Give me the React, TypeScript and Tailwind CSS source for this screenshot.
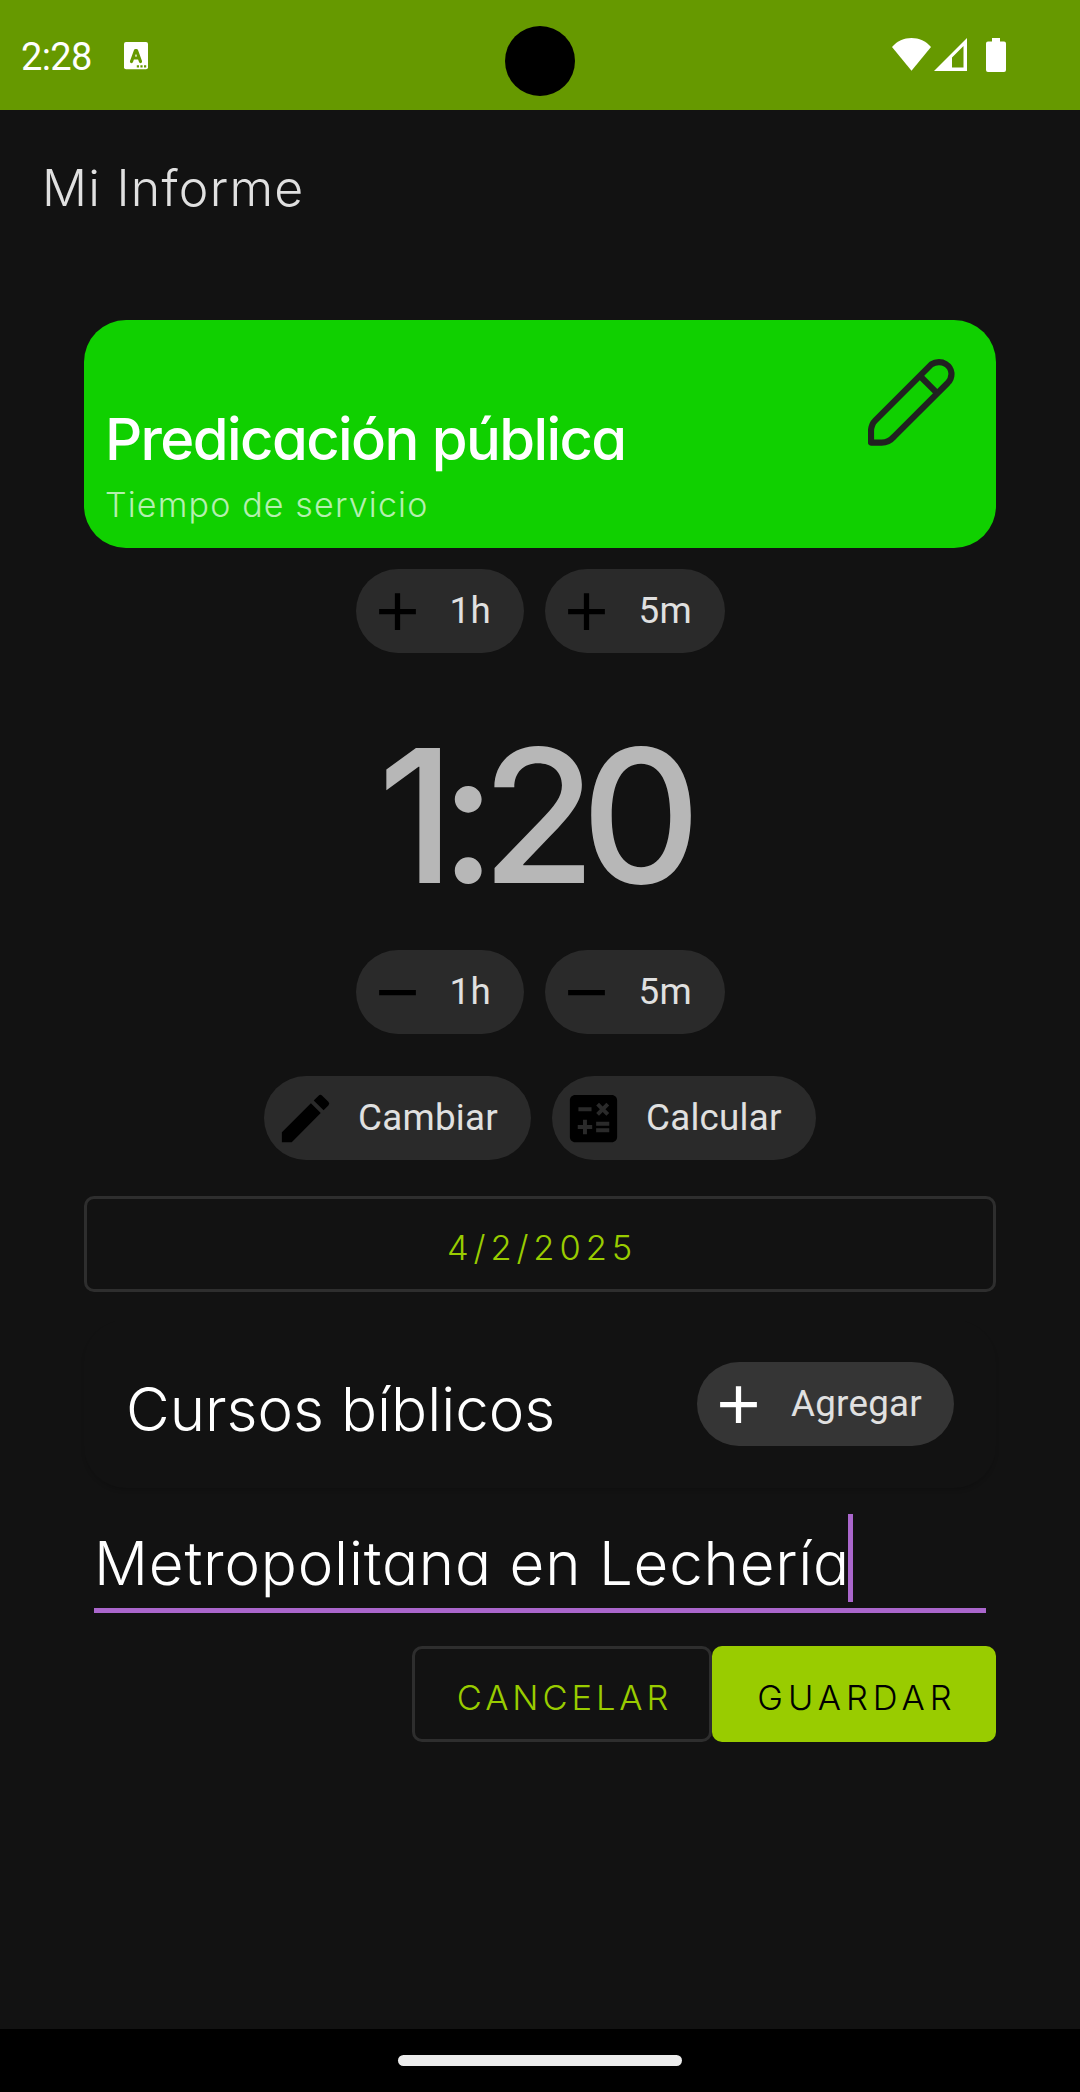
import { MdAdd, MdCalculate, MdEdit, MdRemove } from "react-icons/md";

const StatusBar = () => (
  <header className="relative flex h-[110px] items-start bg-[#669900] text-white">
    <span className="mt-[36px] ml-[21px] w-[103px] font-[Roboto,sans-serif] text-[38px] leading-[43px] font-normal tracking-[-0.6px]">
      2:28
    </span>
    {/* Keyboard notification */}
    <svg className="mt-[42px] h-[28px] w-[24px]" viewBox="0 0 24 28">
      <rect width="24" height="27.3" rx="2" fill="#fff" />
      <path d="M7.5 19.5 11.5 8.5h1L16.5 19.5M9 16h6" fill="none" stroke="#669900" strokeWidth="3.2" strokeLinecap="round" strokeLinejoin="round" />
      <path d="M12.8 23.2h2.2v2.2h-2.2zM16.4 23.2h2.2v2.2h-2.2zM20 23.2h2.2v2.2H20z" fill="#669900" />
    </svg>

    {/* Camera cutout */}
    <div className="absolute top-[26px] left-[505px] size-[70px] rounded-full bg-black" />

    <div className="mt-[38px] mr-[74px] ml-auto flex items-start">
      <svg className="h-[34px] w-[39px]" viewBox="0 0 39 34" fill="#fff">
        <path d="M0 9C5 3 12 0 19.5 0S34 3 39 9L19.5 32.7Z" />
      </svg>
      <svg className="ml-[3px] h-[34px] w-[33px]" viewBox="0 0 33 34">
        <path d="M0 33 33 0V33ZM18 19.5V29.5H29.5V8Z" fill="#fff" fillRule="evenodd" />
      </svg>
      <svg className="ml-[19px] h-[34px] w-[20px]" viewBox="0 0 20 34" fill="#fff">
        <path d="M6 0h8v3.500h4a2 2 0 0 1 2 2V32a2 2 0 0 1-2 2H2a2 2 0 0 1-2-2V5.500a2 2 0 0 1 2-2h4Z" />
      </svg>
    </div>
  </header>
);

const Chip = ({ icon: Icon, label, className = "", iconClassName = "text-black" }) => (
  <button className={`flex h-[84px] items-center rounded-full pl-[10px] ${className}`}>
    <Icon className={`size-[63px] shrink-0 ${iconClassName}`} />
    <span className="ml-[21px] pb-px font-[Roboto,sans-serif] text-[36.75px] leading-[42px] font-normal tracking-[0.25px] text-[#e0e0e0]">
      {label}
    </span>
  </button>
);

const App = () => {
  return (
    <div className="flex h-[2092px] w-[1080px] flex-col bg-[#121212] font-[Inter,sans-serif] font-light whitespace-nowrap [font-feature-settings:'cv11']">
      <StatusBar />

      <h1 className="flex h-[147px] items-center pt-[10px] pl-[42px] text-[50px] tracking-[1.25px] text-[#e0e0e0]">
        Mi Informe
      </h1>

      <main className="mt-[63px] flex flex-col px-[84px]">
        {/* Summary card */}
        <section className="flex h-[228px] justify-between rounded-[42px] bg-[#10d000] pr-[41px] pl-[21px]">
          <div className="pt-[89px]">
            <h2 className="text-[58px] leading-[60px] font-medium tracking-[-1.6px] text-white">Predicación pública</h2>
            <p className="mt-[14px] text-[34px] leading-[44px] tracking-[1.15px] text-white/70">Tiempo de servicio</p>
          </div>
          <svg className="mt-[39px] size-[87px]" viewBox="624 176 261 261" fill="none" stroke="#212121" strokeWidth="18.5" strokeLinejoin="round">
            <path d="M633 427V393Q633 373 646 360L814 192C828 183 846 184 857 191C878 204 880 230 863 248L702 409Q686 427 665 427Z" />
            <path d="M783 230 829 276" />
          </svg>
        </section>

        {/* Time controls */}
        <div className="mt-[21px] flex justify-center gap-[21px]">
          <Chip icon={MdAdd} label="1h" className="w-[168px] bg-[#2a2a2a]" />
          <Chip icon={MdAdd} label="5m" className="w-[180px] bg-[#2a2a2a]" />
        </div>
        <div className="flex h-[297px] items-center justify-center pt-[29px] pr-[16px] text-[186px] leading-none font-[460] tracking-[-15px] text-[#b7b7b7]">
          1:20
        </div>
        <div className="flex justify-center gap-[21px]">
          <Chip icon={MdRemove} label="1h" className="w-[168px] bg-[#2a2a2a]" />
          <Chip icon={MdRemove} label="5m" className="w-[180px] bg-[#2a2a2a]" />
        </div>
        <div className="mt-[42px] flex justify-center gap-[21px]">
          <Chip icon={MdEdit} label="Cambiar" className="w-[267px] bg-[#2a2a2a]" />
          <Chip icon={MdCalculate} label="Calcular" className="w-[264px] bg-[#2a2a2a]" />
        </div>

        <button className="mt-[36px] flex h-[96px] items-center justify-center rounded-[10px] border-3 border-[#2e2e2e] pt-[7px] pl-[4px] text-[34.5px] tracking-[4.9px] text-[#99cc00]">
          4/2/2025
        </button>

        {/* Bible studies */}
        <section className="mt-[28px] flex h-[168px] items-center justify-between rounded-[42px] px-[42px] shadow-[0_3px_4px_-1px_rgba(0,0,0,0.18)]">
          <h2 className="pt-[10px] text-[60px] text-white">Cursos bíblicos</h2>
          <Chip icon={MdAdd} label="Agregar" className="w-[257px] bg-[#353535]" iconClassName="text-white" />
        </section>

        <div className="mx-[10px] mt-[26px] flex h-[99px] items-start border-b-[5px] border-[#aa66cc] text-[60px] leading-[99px] tracking-[0.8px] text-white">
          <span>Metropolitana en Lechería</span>
          <span className="-ml-[2px] h-[88px] w-[5px] bg-[#aa66cc]" />
        </div>

        <div className="mt-[33px] flex justify-end text-[34.5px]">
          <button className="h-[96px] w-[300px] rounded-[10px] border-3 border-[#2e2e2e] pt-[7px] pl-[5px] tracking-[3.9px] text-[#99cc00]">
            CANCELAR
          </button>
          <button className="h-[96px] w-[284px] rounded-[10px] bg-[#99cc00] pt-[7px] pl-[6px] tracking-[5px] text-black">
            GUARDAR
          </button>
        </div>
      </main>

      {/* Navigation bar */}
      <footer className="mt-auto flex h-[63px] justify-center bg-black pt-[26px]">
        <div className="h-[11px] w-[284px] rounded-full bg-[#ececec]" />
      </footer>
    </div>
  );
};

export default App;
